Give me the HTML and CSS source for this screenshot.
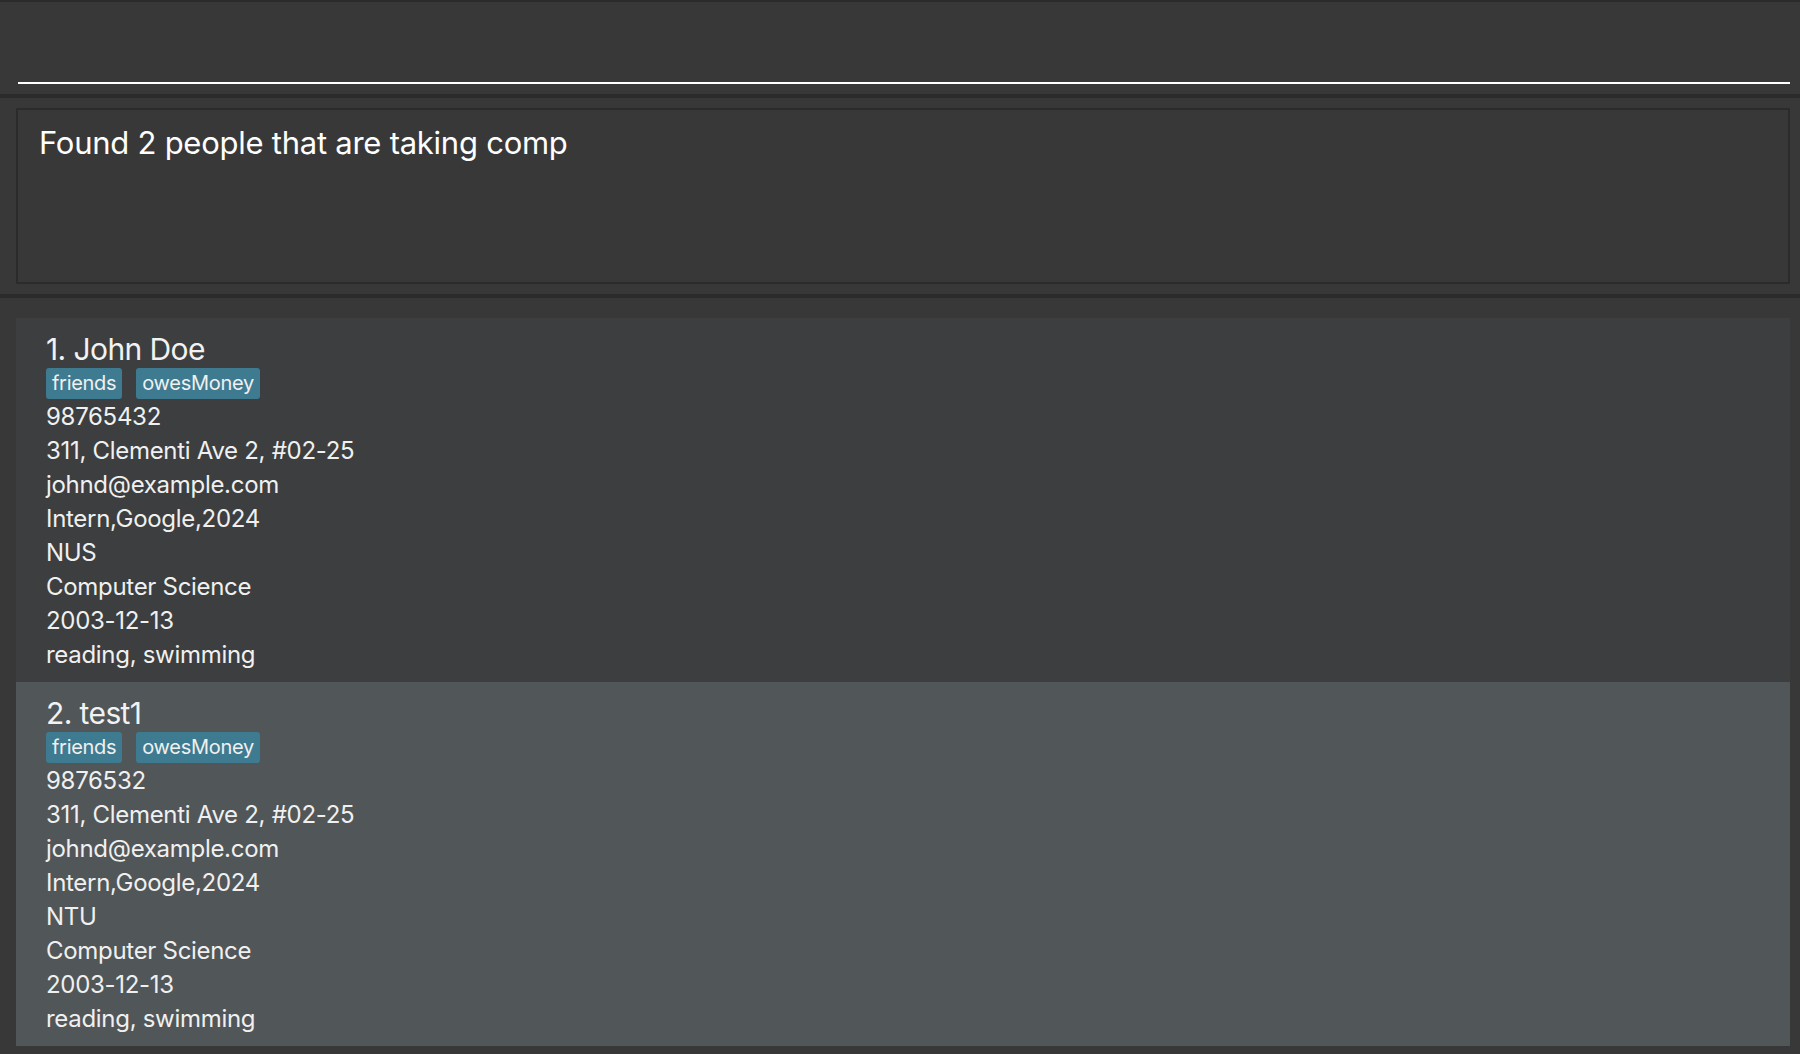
FILE: index.html
```html
<!DOCTYPE html>
<html lang="en">
<head>
<meta charset="utf-8">
<title>Address Book</title>
<link rel="stylesheet" href="styles.css">
</head>
<body>
<div class="app">
  <div class="command-pane">
    <div class="command-input"></div>
  </div>
  <div class="result-pane">
    <div class="result-box">Found 2 people that are taking comp</div>
  </div>
  <div class="list-pane">
    <div class="card even">
      <div class="name">1. John Doe</div>
      <div class="tags"><span class="tag">friends</span><span class="tag">owesMoney</span></div>
      <div class="line">98765432</div>
      <div class="line">311, Clementi Ave 2, #02-25</div>
      <div class="line">johnd@example.com</div>
      <div class="line">Intern,Google,2024</div>
      <div class="line">NUS</div>
      <div class="line">Computer Science</div>
      <div class="line">2003-12-13</div>
      <div class="line">reading, swimming</div>
    </div>
    <div class="card odd">
      <div class="name">2. test1</div>
      <div class="tags"><span class="tag">friends</span><span class="tag">owesMoney</span></div>
      <div class="line">9876532</div>
      <div class="line">311, Clementi Ave 2, #02-25</div>
      <div class="line">johnd@example.com</div>
      <div class="line">Intern,Google,2024</div>
      <div class="line">NTU</div>
      <div class="line">Computer Science</div>
      <div class="line">2003-12-13</div>
      <div class="line">reading, swimming</div>
    </div>
  </div>
</div>
</body>
</html>
```
FILE: styles.css
```css
html, body {
  margin: 0;
  padding: 0;
  background: #383838;
  height: 100%;
}
body {
  font-family: Inter, "Noto Sans", sans-serif;
  color: #ffffff;
}
.app {
  display: flex;
  flex-direction: column;
  height: 1054px;
  overflow: hidden;
}
.command-pane {
  border-top: 2px solid #2b2b2b;
  height: 94px;
  padding: 0 10px 0 18px;
  box-sizing: border-box;
  background: #383838;
}
.command-input {
  height: 80px;
  border-bottom: 2px solid #ffffff;
}
.result-pane {
  border-top: 4px solid #2b2b2b;
  padding: 10px 10px 10px 16px;
  background: #383838;
}
.result-box {
  height: 176px;
  box-sizing: border-box;
  border: 2px solid #2b2b2b;
  padding: 14px 21px;
  font-size: 31px;
  letter-spacing: -0.25px;
  line-height: 38px;
  color: #ffffff;
}
.list-pane {
  flex: 1;
  border-top: 4px solid #2b2b2b;
  padding: 20px 10px 0 16px;
  background: #383838;
}
.card {
  padding: 13px 30px 10px 30px;
  height: 364px;
  box-sizing: border-box;
}
.card.even { background: #3c3e3f; }
.card.odd { background: #515658; }
.name {
  font-size: 30px;
  line-height: 36px;
  letter-spacing: -0.6px;
  color: #f2f2f2;
}
.tags {
  display: flex;
  gap: 14px;
  margin-top: 1px;
  height: 31px;
}
.tag {
  background: #3e7b91;
  color: #f0f0f0;
  font-size: 20px;
  line-height: 27px;
  padding: 2px 6px;
  border-radius: 3px;
  letter-spacing: -0.3px;
}
.line {
  font-size: 24px;
  line-height: 34px;
  letter-spacing: -0.3px;
  color: #f0f0f0;
}
.tags + .line {
  margin-top: 1px;
}
```
